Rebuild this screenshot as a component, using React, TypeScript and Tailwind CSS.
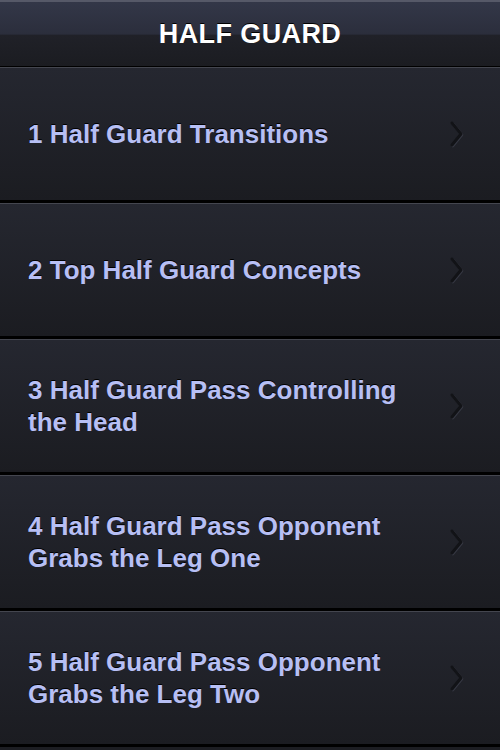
import React from 'react';

const items = [
    '1 Half Guard Transitions',
    '2 Top Half Guard Concepts',
    '3 Half Guard Pass Controlling the Head',
    '4 Half Guard Pass Opponent Grabs the Leg One',
    '5 Half Guard Pass Opponent Grabs the Leg Two',
];

const Chevron = () => (
    <svg width="16" height="30" viewBox="0 0 16 30" className="shrink-0">
        <polyline points="4,4 13,15 4,26" fill="none" stroke="#363843" strokeWidth="3" strokeLinecap="round" strokeLinejoin="round" transform="translate(0.8,0.8)" />
        <polyline points="4,4 13,15 4,26" fill="none" stroke="#121317" strokeWidth="3" strokeLinecap="round" strokeLinejoin="round" />
    </svg>
);

export default function App() {
    return (
        <div className="w-[500px] h-[750px] overflow-hidden bg-[#1c1d22]" style={{ fontFamily: '"Liberation Sans", Arial, sans-serif' }}>
            <div className="h-[66px] border-t-2 border-[#565968] bg-[linear-gradient(to_bottom,#333748_0%,#2b2e3c_50%,#202128_52%,#1b1c21_100%)] flex items-center justify-center">
                <h1 className="text-white font-bold text-[27px] tracking-[0.4px] [text-shadow:0_-1px_0_#000]">HALF GUARD</h1>
            </div>
            <div className="h-px bg-black" />
            {items.map(label => (
                <div key={label} className="h-[136px] border-t border-[#44464f] border-b-[3px] border-b-black bg-[linear-gradient(to_bottom,#252730,#1b1c21)] flex items-center justify-between pl-[28px] pr-[36px]">
                    <span className="text-[#b7bff4] font-bold text-[26px] leading-[32px] max-w-[390px] [text-shadow:0_-1px_0_#000]">{label}</span>
                    <Chevron />
                </div>
            ))}
        </div>
    );
}
